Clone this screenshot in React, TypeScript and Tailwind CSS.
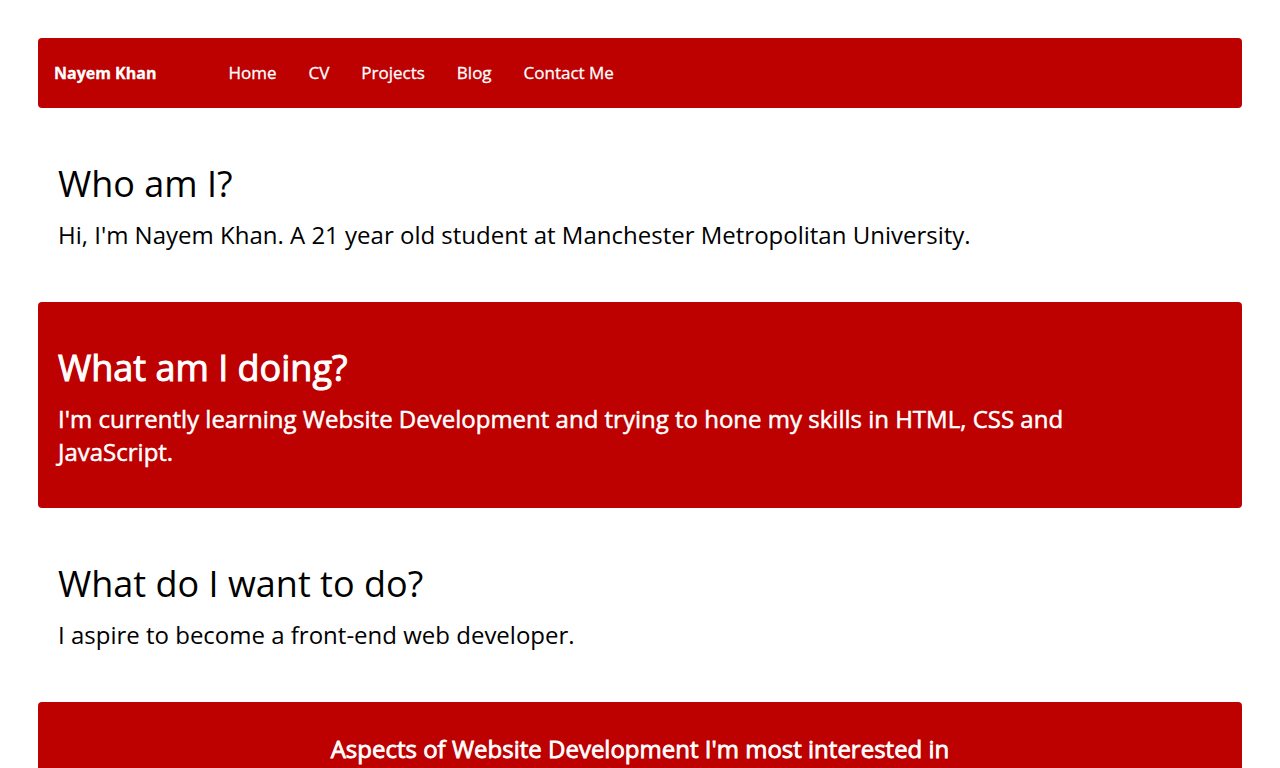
import React from "react";

export default function App() {
  return (
    <div className="min-h-screen bg-white px-[38px] pt-[38px] text-black" style={{ fontFamily: '"Open Sans", "Noto Sans", sans-serif' }}>
      <nav className="flex h-[70px] items-center rounded-[4px] bg-[#bd0000] pl-4 text-white [-webkit-text-stroke:0.3px_white]">
        <span className="mr-[72px] text-[16px] font-bold">Nayem Khan</span>
        <div className="flex gap-8 text-[17px]">
          <a>Home</a>
          <a>CV</a>
          <a>Projects</a>
          <a>Blog</a>
          <a>Contact Me</a>
        </div>
      </nav>

      <section className="px-5 pt-[52px] pb-[51px]">
        <h2 className="text-[36px] leading-[48px]">Who am I?</h2>
        <p className="mt-[10px] max-w-[1060px] text-[24px] leading-[33px]">
          Hi, I'm Nayem Khan. A 21 year old student at Manchester Metropolitan University.
        </p>
      </section>

      <section className="rounded-[4px] bg-[#bd0000] px-5 pt-[42px] pb-[40px] text-white">
        <h2 className="text-[36px] leading-[48px] [-webkit-text-stroke:1px_white]">What am I doing?</h2>
        <p className="mt-[10px] max-w-[1060px] text-[24px] leading-[33px] [-webkit-text-stroke:0.5px_white]">
          I'm currently learning Website Development and trying to hone my skills in HTML, CSS and JavaScript.
        </p>
      </section>

      <section className="px-5 pt-[52px] pb-[51px]">
        <h2 className="text-[36px] leading-[48px]">What do I want to do?</h2>
        <p className="mt-[10px] max-w-[1060px] text-[24px] leading-[33px]">
          I aspire to become a front-end web developer.
        </p>
      </section>

      <section className="rounded-[4px] bg-[#bd0000] px-5 pt-[30px] pb-[40px] text-white">
        <h3 className="text-center text-[24px] leading-[34px] [-webkit-text-stroke:0.8px_white]">
          Aspects of Website Development I'm most interested in
        </h3>
        <p className="mt-4 text-center text-[24px] leading-[33px] [-webkit-text-stroke:0.5px_white]">HTML, CSS and JavaScript</p>
      </section>
    </div>
  );
}
